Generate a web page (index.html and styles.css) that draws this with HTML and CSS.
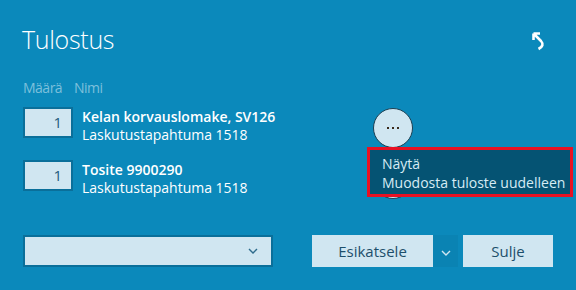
FILE: index.html
```html
<!DOCTYPE html>
<html>
<head>
    <title>Tulostus</title>
    <link rel="stylesheet" href="styles.css">
</head>
<body>

    <div class="print-panel">
        <div class="header">
            <h1 class="title">Tulostus</h1>
            <button class="back" aria-label="Takaisin">
                <svg width="16" height="20" viewBox="0 0 16 20">
                    <path d="M2.5 2.5 L9 2.5 M2.5 2.5 L2.5 9 M2.5 2.5 L10 10 Q14 14.5 7.5 18" fill="none" stroke="#fff" stroke-width="2.6" stroke-linecap="butt"/>
                </svg>
            </button>
        </div>

        <div class="columns">
            <span class="col-qty">Määrä</span>
            <span>Nimi</span>
        </div>

        <div class="doc-row">
            <div class="qty">1</div>
            <div class="doc-name">
                <div class="doc-title">Kelan korvauslomake, SV126</div>
                <div class="doc-sub">Laskutustapahtuma 1518</div>
            </div>
            <button class="more" aria-label="Lisää toimintoja">
                <svg width="12" height="4" viewBox="0 0 12 4">
                    <rect x="0" y="1" width="2" height="2" fill="#3a2a1c"/>
                    <rect x="5" y="1" width="2" height="2" fill="#3a2a1c"/>
                    <rect x="10" y="1" width="2" height="2" fill="#3a2a1c"/>
                </svg>
            </button>
        </div>

        <div class="doc-row second">
            <div class="qty">1</div>
            <div class="doc-name">
                <div class="doc-title">Tosite 9900290</div>
                <div class="doc-sub">Laskutustapahtuma 1518</div>
            </div>
            <button class="more" aria-label="Lisää toimintoja">
                <svg width="12" height="4" viewBox="0 0 12 4">
                    <rect x="0" y="1" width="2" height="2" fill="#3a2a1c"/>
                    <rect x="5" y="1" width="2" height="2" fill="#3a2a1c"/>
                    <rect x="10" y="1" width="2" height="2" fill="#3a2a1c"/>
                </svg>
            </button>
        </div>

        <div class="footer">
            <div class="select">
                <svg class="chevron" width="10" height="6" viewBox="0 0 10 6">
                    <path d="M1 1 L5 5 L9 1" fill="none" stroke="#2d6b8c" stroke-width="1.4"/>
                </svg>
            </div>
            <div class="actions">
                <button class="btn preview">Esikatsele</button>
                <button class="split" aria-label="Lisää">
                    <svg width="10" height="6" viewBox="0 0 10 6">
                        <path d="M1 1 L5 5 L9 1" fill="none" stroke="#d0e6f1" stroke-width="1.4"/>
                    </svg>
                </button>
                <button class="btn close">Sulje</button>
            </div>
        </div>

        <div class="menu">
            <div class="menu-item">Näytä</div>
            <div class="menu-item">Muodosta tuloste uudelleen</div>
        </div>
    </div>

</body>
</html>
```

FILE: styles.css
```css
body {
    margin: 0;
    width: 576px;
    height: 290px;
    overflow: hidden;
    background: #0b89bb;
    font-family: "Open Sans", "Noto Sans", sans-serif;
    color: #fff;
}
.print-panel {
    position: relative;
    height: 290px;
    padding: 0 23px;
    box-sizing: border-box;
}
.header {
    display: flex;
    justify-content: space-between;
    align-items: flex-start;
    padding-top: 22px;
}
.title {
    margin: 0 0 0 -1px;
    font-size: 25px;
    font-weight: 300;
    line-height: 34px;
    letter-spacing: -0.3px;
}
.back {
    background: none;
    border: none;
    padding: 0;
    margin: 9px 6px 0 0;
    cursor: pointer;
}
.columns {
    display: flex;
    margin-top: 22px;
    font-size: 14px;
    line-height: 20px;
    letter-spacing: -0.5px;
    color: #7dc0dc;
}
.col-qty {
    width: 51px;
}
.doc-row {
    display: flex;
    align-items: flex-start;
    margin-top: 9px;
    font-size: 14px;
}
.doc-row.second {
    margin-top: 12px;
}
.qty {
    width: 50px;
    height: 31px;
    box-sizing: border-box;
    border: 2px solid #0a6f9a;
    background: #d0e6f1;
    color: #1d5a7c;
    font-size: 15px;
    line-height: 27px;
    text-align: right;
    padding-right: 9px;
}
.doc-name {
    width: 291px;
    padding-left: 9px;
    line-height: 18px;
    padding-top: 1px;
}
.doc-title {
    font-weight: 600;
}
.more {
    width: 40px;
    height: 40px;
    margin-top: 1px;
    border-radius: 50%;
    border: 1px solid #1b3f52;
    background: #d0e6f1;
    padding: 0;
    display: flex;
    align-items: center;
    justify-content: center;
    cursor: pointer;
}
.doc-row.second .more {
    margin-top: -1px;
}
.footer {
    display: flex;
    margin-top: 36px;
}
.select {
    width: 250px;
    height: 32px;
    box-sizing: border-box;
    border: 2px solid #0a6f9a;
    background: #d0e6f1;
    display: flex;
    justify-content: flex-end;
    align-items: center;
    padding-right: 13px;
}
.actions {
    display: flex;
    margin-left: 39px;
}
.btn {
    height: 32px;
    border: none;
    background: #d0e6f1;
    color: #1d4f6b;
    font-family: inherit;
    font-size: 15px;
    padding: 0;
    cursor: pointer;
}
.preview {
    width: 121px;
}
.split {
    width: 25px;
    height: 32px;
    border: none;
    background: #0a83b3;
    padding: 0;
    margin-right: 5px;
    cursor: pointer;
}
.close {
    width: 90px;
}
.menu {
    position: absolute;
    left: 367px;
    top: 147px;
    width: 206px;
    height: 50px;
    box-sizing: border-box;
    border: 3px solid #e81123;
    background: #055373;
    padding: 4px 0 0 12px;
    font-size: 14px;
    line-height: 19px;
    color: #d6ecf5;
}
```
